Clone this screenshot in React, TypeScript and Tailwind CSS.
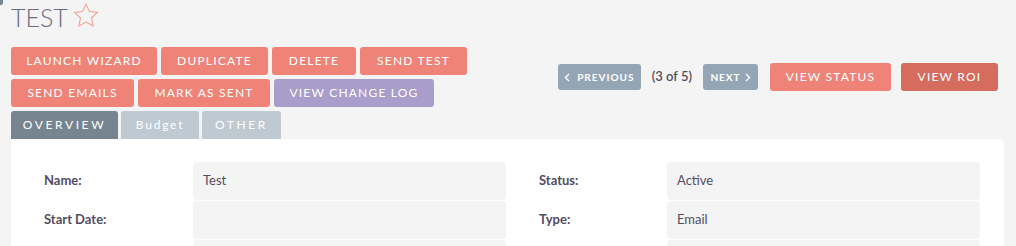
import React from "react";

const salmon = "bg-[#f08377]";

function Btn({ label, w, color = salmon }: { label: string; w: string; color?: string }) {
  return (
    <div
      className={`${w} ${color} h-[28px] rounded-[3px] flex items-center justify-center text-white text-[12px] tracking-[1.2px] uppercase`}
    >
      {label}
    </div>
  );
}

function Field({ label, value, labelW }: { label: string; value: string; labelW: string }) {
  return (
    <div className="flex items-center">
      <div className={`${labelW} text-[13px] font-bold text-[#534d64]`}>{label}</div>
      <div className="w-[313px] h-[38px] rounded-[4px] bg-[#f4f4f4] flex items-center pl-[10px] text-[13px] text-[#534d64]">
        {value}
      </div>
    </div>
  );
}

export default function App() {
  return (
    <div
      className="relative w-[1016px] h-[246px] overflow-hidden bg-[#f4f4f4]"
      style={{ fontFamily: "Lato, 'Open Sans', sans-serif" }}
    >
      <div className="absolute left-[-2px] top-[-2px] w-[5px] h-[7px] rounded-[2px] bg-[#778591]" />
      <div className="pl-[11px] pt-[3px] flex items-center h-[32px]">
        <span className="text-[25px] font-light tracking-[0px] text-[#6b6a80] leading-none">TEST</span>
        <svg width="26" height="25" viewBox="0 0 24 23" className="ml-[5px] mt-[-5px]">
          <path
            d="M12 1l3.2 6.8 7.4.9-5.5 5.1 1.5 7.4L12 17.5l-6.6 3.7 1.5-7.4-5.5-5.1 7.4-.9z"
            fill="none"
            stroke="#f4a191"
            strokeWidth="1"
          />
        </svg>
      </div>
      <div className="flex items-center justify-between pl-[11px] pr-[18px] mt-[15px]">
        <div className="flex flex-col gap-[4px]">
          <div className="flex gap-[4px]">
            <Btn label="Launch Wizard" w="w-[146px]" />
            <Btn label="Duplicate" w="w-[107px]" />
            <Btn label="Delete" w="w-[84px]" />
            <Btn label="Send Test" w="w-[107px]" />
          </div>
          <div className="flex gap-[4px]">
            <Btn label="Send Emails" w="w-[123px]" />
            <Btn label="Mark as Sent" w="w-[132px]" />
            <Btn label="View Change Log" w="w-[160px]" color="bg-[#a99dcb]" />
          </div>
        </div>
        <div className="flex items-center">
          <div className="w-[83px] h-[26px] rounded-[3px] bg-[#94a6b5] flex items-center justify-center text-white text-[10px] font-bold tracking-[1px]">
            <svg width="6" height="9" viewBox="0 0 6 9" className="mr-[7px]">
              <path d="M5 1L1.5 4.5 5 8" fill="none" stroke="white" strokeWidth="1.4" />
            </svg>
            PREVIOUS
          </div>
          <span className="ml-[11px] mr-[11px] text-[13px] font-semibold text-[#534d64]">(3 of 5)</span>
          <div className="w-[55px] h-[26px] rounded-[3px] bg-[#94a6b5] flex items-center justify-center text-white text-[10px] font-bold tracking-[1px]">
            NEXT
            <svg width="6" height="9" viewBox="0 0 6 9" className="ml-[4px]">
              <path d="M1 1l3.5 3.5L1 8" fill="none" stroke="white" strokeWidth="1.4" />
            </svg>
          </div>
          <div className="ml-[12px] w-[121px] h-[28px] rounded-[3px] bg-[#f08377] flex items-center justify-center text-white text-[12px] tracking-[1.2px]">
            VIEW STATUS
          </div>
          <div className="ml-[10px] w-[97px] h-[28px] rounded-[3px] bg-[#d66c5e] flex items-center justify-center text-white text-[12px] tracking-[1.2px]">
            VIEW ROI
          </div>
        </div>
      </div>
      <div className="flex gap-[3px] pl-[11px] mt-[4px]">
        <div className="w-[107px] h-[28px] rounded-t-[3px] bg-[#778591] flex items-center justify-center text-white text-[12px] tracking-[2.6px]">
          OVERVIEW
        </div>
        <div className="w-[78px] h-[28px] rounded-t-[3px] bg-[#bfc9d1] flex items-center justify-center text-white text-[12px] tracking-[1.8px]">
          Budget
        </div>
        <div className="w-[79px] h-[28px] rounded-t-[3px] bg-[#bfc9d1] flex items-center justify-center text-white text-[12px] tracking-[2.6px]">
          OTHER
        </div>
      </div>
      <div className="ml-[11px] w-[993px] h-[120px] bg-white rounded-tr-[4px] pl-[33px] pt-[23px] flex gap-[33px]">
        <div className="flex flex-col gap-[1px]">
          <Field label="Name:" value="Test" labelW="w-[149px]" />
          <Field label="Start Date:" value="" labelW="w-[149px]" />
          <Field label="" value="" labelW="w-[149px]" />
        </div>
        <div className="flex flex-col gap-[1px]">
          <Field label="Status:" value="Active" labelW="w-[128px]" />
          <Field label="Type:" value="Email" labelW="w-[128px]" />
          <Field label="" value="" labelW="w-[128px]" />
        </div>
      </div>
    </div>
  );
}
